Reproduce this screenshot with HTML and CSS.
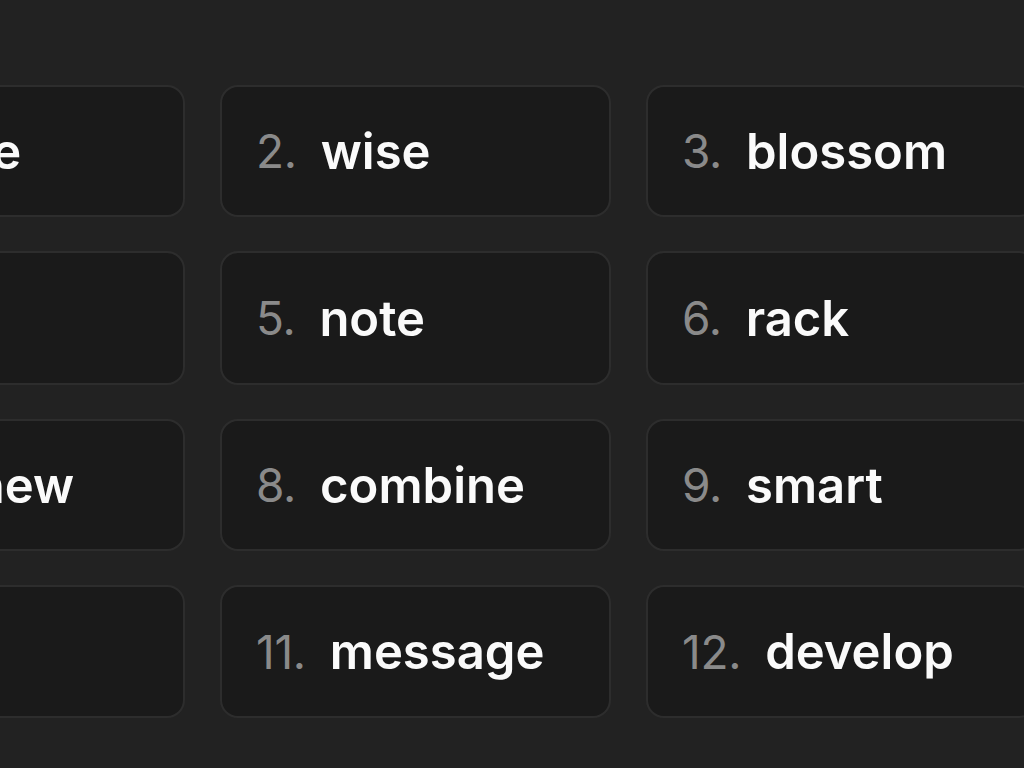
FILE: index.html
```html
<!DOCTYPE html>
<html lang="en">
<head>
<meta charset="utf-8">
<title>Recovery phrase</title>
<link rel="stylesheet" href="styles.css">
</head>
<body>
<main class="phrase-grid">
  <div class="word-card"><span class="num">1.</span><span class="word">purse</span></div>
  <div class="word-card"><span class="num">2.</span><span class="word">wise</span></div>
  <div class="word-card"><span class="num">3.</span><span class="word">blossom</span></div>
  <div class="word-card"><span class="num">4.</span><span class="word">cat</span></div>
  <div class="word-card"><span class="num">5.</span><span class="word">note</span></div>
  <div class="word-card"><span class="num">6.</span><span class="word">rack</span></div>
  <div class="word-card"><span class="num">7.</span><span class="word">unknew</span></div>
  <div class="word-card"><span class="num">8.</span><span class="word">combine</span></div>
  <div class="word-card"><span class="num">9.</span><span class="word">smart</span></div>
  <div class="word-card"><span class="num">10.</span><span class="word">cup</span></div>
  <div class="word-card"><span class="num">11.</span><span class="word">message</span></div>
  <div class="word-card"><span class="num">12.</span><span class="word">develop</span></div>
</main>
</body>
</html>
```
FILE: styles.css
```css
html, body {
  margin: 0;
  padding: 0;
  background: #222222;
  overflow: hidden;
  width: 1024px;
  height: 768px;
}

.phrase-grid {
  display: grid;
  grid-template-columns: repeat(3, 391px);
  grid-template-rows: 132px 134px 132px 133px;
  column-gap: 35px;
  row-gap: 34px;
  margin-left: -206px;
  padding-top: 85px;
  font-family: Inter, "Noto Sans", sans-serif;
}

.word-card {
  box-sizing: border-box;
  display: flex;
  align-items: center;
  padding-left: 34px;
  background: #1a1a1a;
  border: 2px solid #2d2d2d;
  border-radius: 18px;
  white-space: nowrap;
}

.num {
  font-size: 46px;
  font-weight: 400;
  color: #8a8a8a;
  margin-right: 24px;
  letter-spacing: -0.3px;
}

.word {
  font-size: 49px;
  font-weight: 600;
  color: #fafafa;
  letter-spacing: 0;
}
```
